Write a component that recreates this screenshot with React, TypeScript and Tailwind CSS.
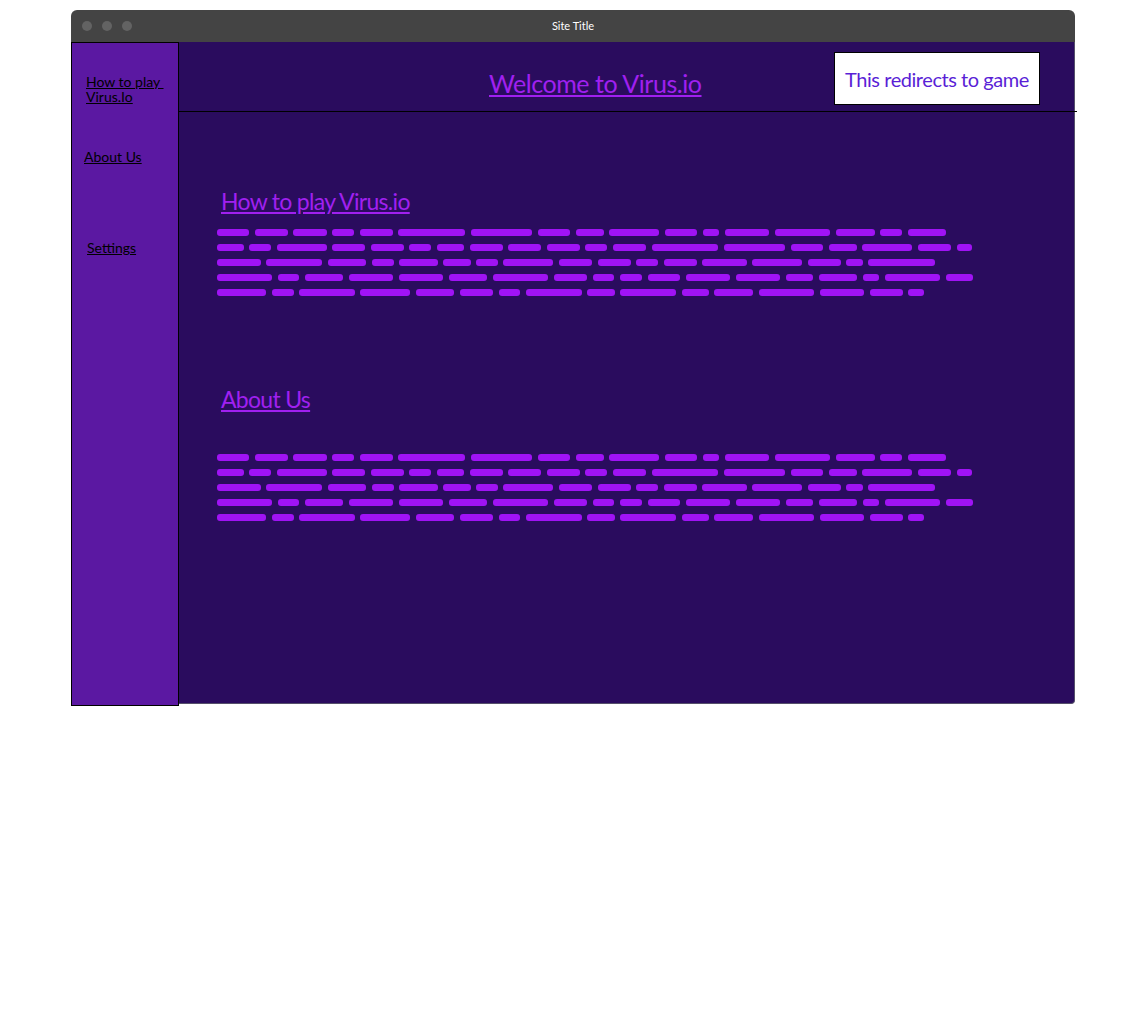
import React from "react";

const rows: number[][][] = [
  [[217,249],[255,288],[293,327],[332,354],[360,393],[398,465],[471,532],[538,570],[576,604],[609,659],[665,697],[703,719],[725,769],[775,830],[836,875],[880,902],[908,946]],
  [[217,244],[249,271],[277,327],[332,365],[371,404],[409,431],[437,464],[470,503],[508,541],[547,580],[585,607],[613,646],[652,718],[724,785],[791,823],[829,857],[862,912],[918,951],[957,972]],
  [[217,261],[266,322],[328,366],[372,394],[399,438],[443,471],[476,498],[503,553],[559,592],[598,631],[636,658],[664,697],[702,747],[752,802],[808,841],[846,863],[868,935]],
  [[217,272],[278,299],[305,343],[349,393],[399,443],[449,487],[493,548],[554,587],[593,614],[620,642],[648,680],[686,730],[736,780],[786,813],[819,857],[863,879],[885,940],[946,973]],
  [[217,266],[272,294],[299,355],[360,410],[416,454],[460,493],[499,520],[526,582],[587,615],[620,676],[682,709],[714,753],[759,814],[820,864],[870,903],[908,924]],
];

function TextBlock() {
  return (
    <div className="ml-[38px] flex flex-col gap-[8px]">
      {rows.map((row, i) => (
        <div key={i} className="flex h-[7px]">
          {row.map(([s, e], j) => (
            <div
              key={j}
              className="h-[7px] rounded-[3px] bg-[#a013f5] shrink-0"
              style={{ width: e - s, marginLeft: s - (j === 0 ? 217 : row[j - 1][1]) }}
            />
          ))}
        </div>
      ))}
    </div>
  );
}

export default function App() {
  return (
    <div className="w-full h-[1022px] bg-white font-['Lato','Noto_Sans',sans-serif]">
      <div className="pt-[10px] pl-[71px]">
        <div className="w-[1004px]">
          <div className="h-[32px] bg-[#444444] rounded-t-[6px] flex items-center relative">
            <div className="flex gap-[10px] ml-[11px]">
              <span className="w-[10px] h-[10px] rounded-full bg-[#636363]" />
              <span className="w-[10px] h-[10px] rounded-full bg-[#636363]" />
              <span className="w-[10px] h-[10px] rounded-full bg-[#636363]" />
            </div>
            <span className="absolute inset-x-0 text-center text-[11px] text-white whitespace-nowrap">Site Title</span>
          </div>
          <div className="flex items-start">
            <div className="w-[108px] h-[664px] shrink-0 bg-[#5b18a2] border border-black text-black text-[14px] leading-[15px]">
              <div className="mt-[31px] ml-[14px] underline whitespace-pre">How to play {"\n"}Virus.Io</div>
              <div className="mt-[45px] ml-[12px] underline">About Us</div>
              <div className="mt-[76px] ml-[15px] underline">Settings</div>
            </div>
            <div className="flex-1 h-[662px] bg-[#2a0c5e] border-r border-b border-[#55506a] rounded-br-[4px]">
              <div className="h-[70px] border-b border-black mr-[-3px] flex items-start">
                <a className="ml-[310px] mt-[28px] text-[25px] leading-[26px] tracking-[-0.45px] text-[#a020f0] underline whitespace-nowrap">Welcome to Virus.io</a>
                <button className="ml-auto mr-[37px] mt-[10px] w-[206px] h-[53px] bg-white border border-black text-[#5a1fd6] text-[20px] tracking-[-0.45px]">This redirects to game</button>
              </div>
              <div className="ml-[42px] mt-[77px] text-[23px] leading-[24px] tracking-[-0.7px] text-[#a020f0] underline">How to play Virus.io</div>
              <div className="mt-[16px]"><TextBlock /></div>
              <div className="ml-[42px] mt-[91px] text-[23px] leading-[24px] tracking-[-0.7px] text-[#a020f0] underline">About Us</div>
              <div className="mt-[43px]"><TextBlock /></div>
            </div>
          </div>
        </div>
      </div>
    </div>
  );
}
